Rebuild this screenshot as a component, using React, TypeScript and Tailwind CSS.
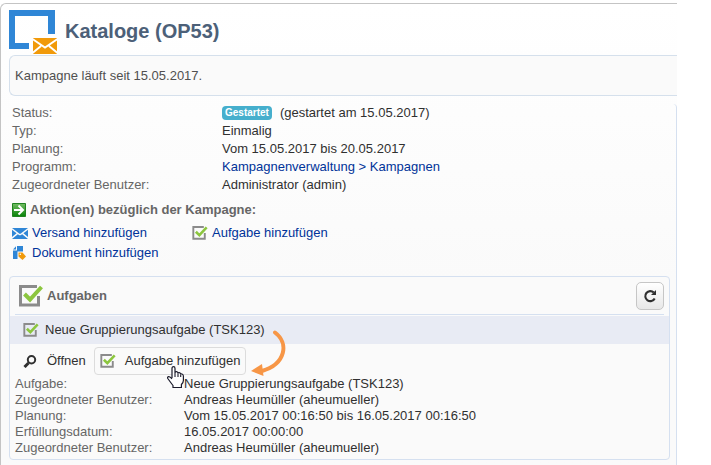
import type { JSX, ReactNode } from 'react';

type Row = { label: string; value: ReactNode };

const TASK_ROWS: Row[] = [
  { label: 'Aufgabe:', value: 'Neue Gruppierungsaufgabe (TSK123)' },
  { label: 'Zugeordneter Benutzer:', value: 'Andreas Heumüller (aheumueller)' },
  { label: 'Planung:', value: 'Vom 15.05.2017 00:16:50 bis 16.05.2017 00:16:50' },
  { label: 'Erfüllungsdatum:', value: '16.05.2017 00:00:00' },
  { label: 'Zugeordneter Benutzer:', value: 'Andreas Heumüller (aheumueller)' },
];

const CAMPAIGN_ROWS: Row[] = [
  {
    label: 'Status:',
    value: (
      <span className="flex items-center gap-2">
        <span className="h-[14px] rounded bg-[#46afcd] px-[3px] text-[10px] leading-[14px] font-bold text-white">
          Gestartet
        </span>
        (gestartet am 15.05.2017)
      </span>
    ),
  },
  { label: 'Typ:', value: 'Einmalig' },
  { label: 'Planung:', value: 'Vom 15.05.2017 bis 20.05.2017' },
  {
    label: 'Programm:',
    value: (
      <a href="#programm" className="text-[#003399]">
        Kampagnenverwaltung &gt; Kampagnen
      </a>
    ),
  },
  { label: 'Zugeordneter Benutzer:', value: 'Administrator (admin)' },
];

function CampaignIcon(): JSX.Element {
  return (
    <svg viewBox="0 0 48 44" className="h-11 w-12 shrink-0" aria-hidden="true">
      <path d="M0 0h46v24h-7V6H6v27h14v6H0z" fill="#2f86d6" />
      <path d="M24 28h24v16H24z" fill="#f19a0a" />
      <path d="M23.500 29l12.500 8.500L48.500 29M23.500 43l8.500-7M48.500 43l-8.500-7" fill="none" stroke="#fff" strokeWidth="1.900" />
    </svg>
  );
}

function TaskIcon({ className }: { className: string }): JSX.Element {
  return (
    <svg viewBox="0 0 24 22" className={className} aria-hidden="true">
      <path d="M18 1.500H1.500v18.500h18V11" fill="none" stroke="#8b8b8b" strokeWidth="3" />
      <path d="M5.500 9l5.500 5.500L22.500 2" fill="none" stroke="#8cc63f" strokeWidth="4" />
    </svg>
  );
}

function ActionIcon(): JSX.Element {
  return (
    <svg viewBox="0 0 14 14" className="size-[14px] shrink-0" aria-hidden="true">
      <defs>
        <linearGradient id="action-fill" x2="0" y2="1">
          <stop stopColor="#75bd65" />
          <stop offset="1" stopColor="#078307" />
        </linearGradient>
      </defs>
      <path d="M.5.5h13v13H.5z" fill="url(#action-fill)" stroke="#218321" />
      <path d="M2 7h9M6.500 2.500L11 7l-4.500 4.500" fill="none" stroke="#fff" strokeWidth="2" />
    </svg>
  );
}

function MailIcon(): JSX.Element {
  return (
    <svg viewBox="0 0 16 11" className="h-[11px] w-4 shrink-0" aria-hidden="true">
      <path d="M0 0h16L8.800 5.600q-.8.600-1.600 0z" fill="#2f86d6" />
      <path d="M0 11l5.800-4.800 1.200.8q1 .6 2 0l1.200-.8L16 11z" fill="#2f86d6" />
      <path d="M0 1.800L4.600 5.300 0 9zM16 1.800l-4.600 3.500L16 9z" fill="#2f86d6" />
    </svg>
  );
}

function DocumentIcon(): JSX.Element {
  return (
    <svg viewBox="0 0 16 14" className="h-[14px] w-4 shrink-0" aria-hidden="true">
      <path d="M5 0h6v5.500H5.500V13H1V4.500h4z" fill="#2f86d6" />
      <path d="M1 3.500L4 .3v3.200z" fill="#2f86d6" />
      <path d="M6.500 6.500h4l3.500 4-3.500 3.500-4-3.500z" fill="#f19a0a" />
      <circle cx="8.300" cy="8.300" r=".8" fill="#fff" />
    </svg>
  );
}

function SearchIcon(): JSX.Element {
  return (
    <svg viewBox="0 0 14 13" className="h-[13px] w-[14px] shrink-0" aria-hidden="true">
      <circle cx="8.500" cy="4.700" r="3.700" fill="none" stroke="#303030" strokeWidth="2" />
      <path d="M5.500 8L1.500 12" stroke="#303030" strokeWidth="3" />
    </svg>
  );
}

function RefreshIcon(): JSX.Element {
  return (
    <svg viewBox="0 0 14 14" className="size-[14px]" aria-hidden="true">
      <path d="M10.800 3.600A5 5 0 1 0 11.700 9.500" fill="none" stroke="#303030" strokeWidth="2.100" />
      <path d="M13 1v5H8z" fill="#303030" />
    </svg>
  );
}

function HandCursor(): JSX.Element {
  return (
    <svg viewBox="0 0 17 22" className="absolute top-[19px] left-[73px] z-10 h-[22px] w-[17px]" aria-hidden="true">
      <path
        d="M5 12V2.500Q5 .700 6.500 .700t1.500 1.800V7Q8 5.500 9.500 5.700t1.500 1.800Q11 6.500 12.300 6.700t1.400 1.800Q13.700 7.500 15 8t1.400 2v4.500q0 2-2 4v3H6v-2Q4 17 .8 12.500 0 11 1.500 10.600T5 13"
        fill="#fff"
        stroke="#1b1b2b"
        strokeWidth="1.200"
      />
      <path d="M8 7v4M11 7.500V11M13.700 8.500V11" stroke="#1b1b2b" strokeWidth="1.100" />
    </svg>
  );
}

function FlowArrow(): JSX.Element {
  return (
    <svg viewBox="0 0 38 48" className="absolute top-[-17px] left-[156px] h-12 w-[38px]" aria-hidden="true">
      <path d="M25 2.500C39 13 36 34 12 41" fill="none" stroke="#f79646" strokeWidth="4" strokeLinecap="round" />
      <path d="M1 41l11-7 1.500 12z" fill="#f79646" />
    </svg>
  );
}

export default function App(): JSX.Element {
  return (
    <div className="min-h-screen bg-white pt-[3px] pr-[34px] font-['Liberation_Sans',Arial,sans-serif] text-[13px] text-[#303030]">
      <main className="flex min-h-[calc(100vh-3px)] flex-col rounded-tl-md border-t border-l border-[#c4c4c4] bg-linear-to-b from-white to-[#fafafa] to-60%">
        <header className="flex h-[51px] gap-2 pt-[6px] pl-2">
          <CampaignIcon />
          <h1 className="text-xl leading-[42px] font-bold text-[#4c6078]">Kataloge (OP53)</h1>
        </header>

        <p className="ml-2 rounded-l-md border border-r-0 border-[#d5e0ec] bg-[#fafafa] px-[5px] leading-[39px] text-[#505050]">
          Kampagne läuft seit 15.05.2017.
        </p>

        <div className="mt-2 flex grow flex-col rounded-tr-sm border-r border-[#d5e0f0] pr-[6px] pl-2">
          <dl className="pl-[3px] leading-[18px]">
            {CAMPAIGN_ROWS.map((row) => (
              <div key={row.label} className="grid grid-cols-[210px_1fr]">
                <dt className="text-[#666]">{row.label}</dt>
                <dd>{row.value}</dd>
              </div>
            ))}
          </dl>

          <section className="mt-2 pl-[3px]">
            <h2 className="flex items-center gap-1 leading-4 font-bold text-[#666]">
              <ActionIcon />
              Aktion(en) bezüglich der Kampagne:
            </h2>
            <div className="mt-[5px] grid grid-cols-[180px_1fr] leading-5 text-[#003399]">
              <a href="#versand" className="flex items-center gap-1">
                <MailIcon />
                Versand hinzufügen
              </a>
              <a href="#aufgabe" className="flex items-center gap-1">
                <TaskIcon className="h-[14px] w-4 shrink-0" />
                Aufgabe hinzufügen
              </a>
              <a href="#dokument" className="flex items-center gap-1">
                <DocumentIcon />
                Dokument hinzufügen
              </a>
            </div>
          </section>

          <section className="mt-[13px] rounded border border-[#d5e0f0] bg-[#fafafa] pb-[3px]">
            <div className="mx-[5px] flex h-[38px] items-center justify-between border-b border-[#d5e0f0] pl-1">
              <h2 className="flex items-center gap-1 font-bold text-[#666]">
                <TaskIcon className="h-[22px] w-6 shrink-0" />
                Aufgaben
              </h2>
              <button
                type="button"
                aria-label="Aktualisieren"
                className="flex size-7 items-center justify-center rounded-[5px] border border-[#c6c6c6] bg-linear-to-b from-white to-[#e8e8e8]"
              >
                <RefreshIcon />
              </button>
            </div>

            <a href="#tsk123" className="mt-px flex h-7 items-center gap-[6px] bg-[#e8ebf4] pl-[13px]">
              <TaskIcon className="h-[14px] w-4 shrink-0" />
              Neue Gruppierungsaufgabe (TSK123)
            </a>

            <div className="flex h-8 items-center gap-2 pt-[2px] pl-[13px]">
              <button type="button" className="flex items-center gap-[10px]">
                <SearchIcon />
                Öffnen
              </button>
              <div className="relative">
                <button
                  type="button"
                  className="flex h-7 items-center gap-[9px] rounded border border-[#dcdcdc] px-[5px]"
                >
                  <TaskIcon className="h-[14px] w-4 shrink-0" />
                  Aufgabe hinzufügen
                </button>
                <HandCursor />
                <FlowArrow />
              </div>
            </div>

            <dl className="pl-[5px] leading-4">
              {TASK_ROWS.map((row, i) => (
                <div key={i} className="grid grid-cols-[169px_1fr]">
                  <dt className="text-[#666]">{row.label}</dt>
                  <dd>{row.value}</dd>
                </div>
              ))}
            </dl>
          </section>
        </div>
      </main>
    </div>
  );
}
